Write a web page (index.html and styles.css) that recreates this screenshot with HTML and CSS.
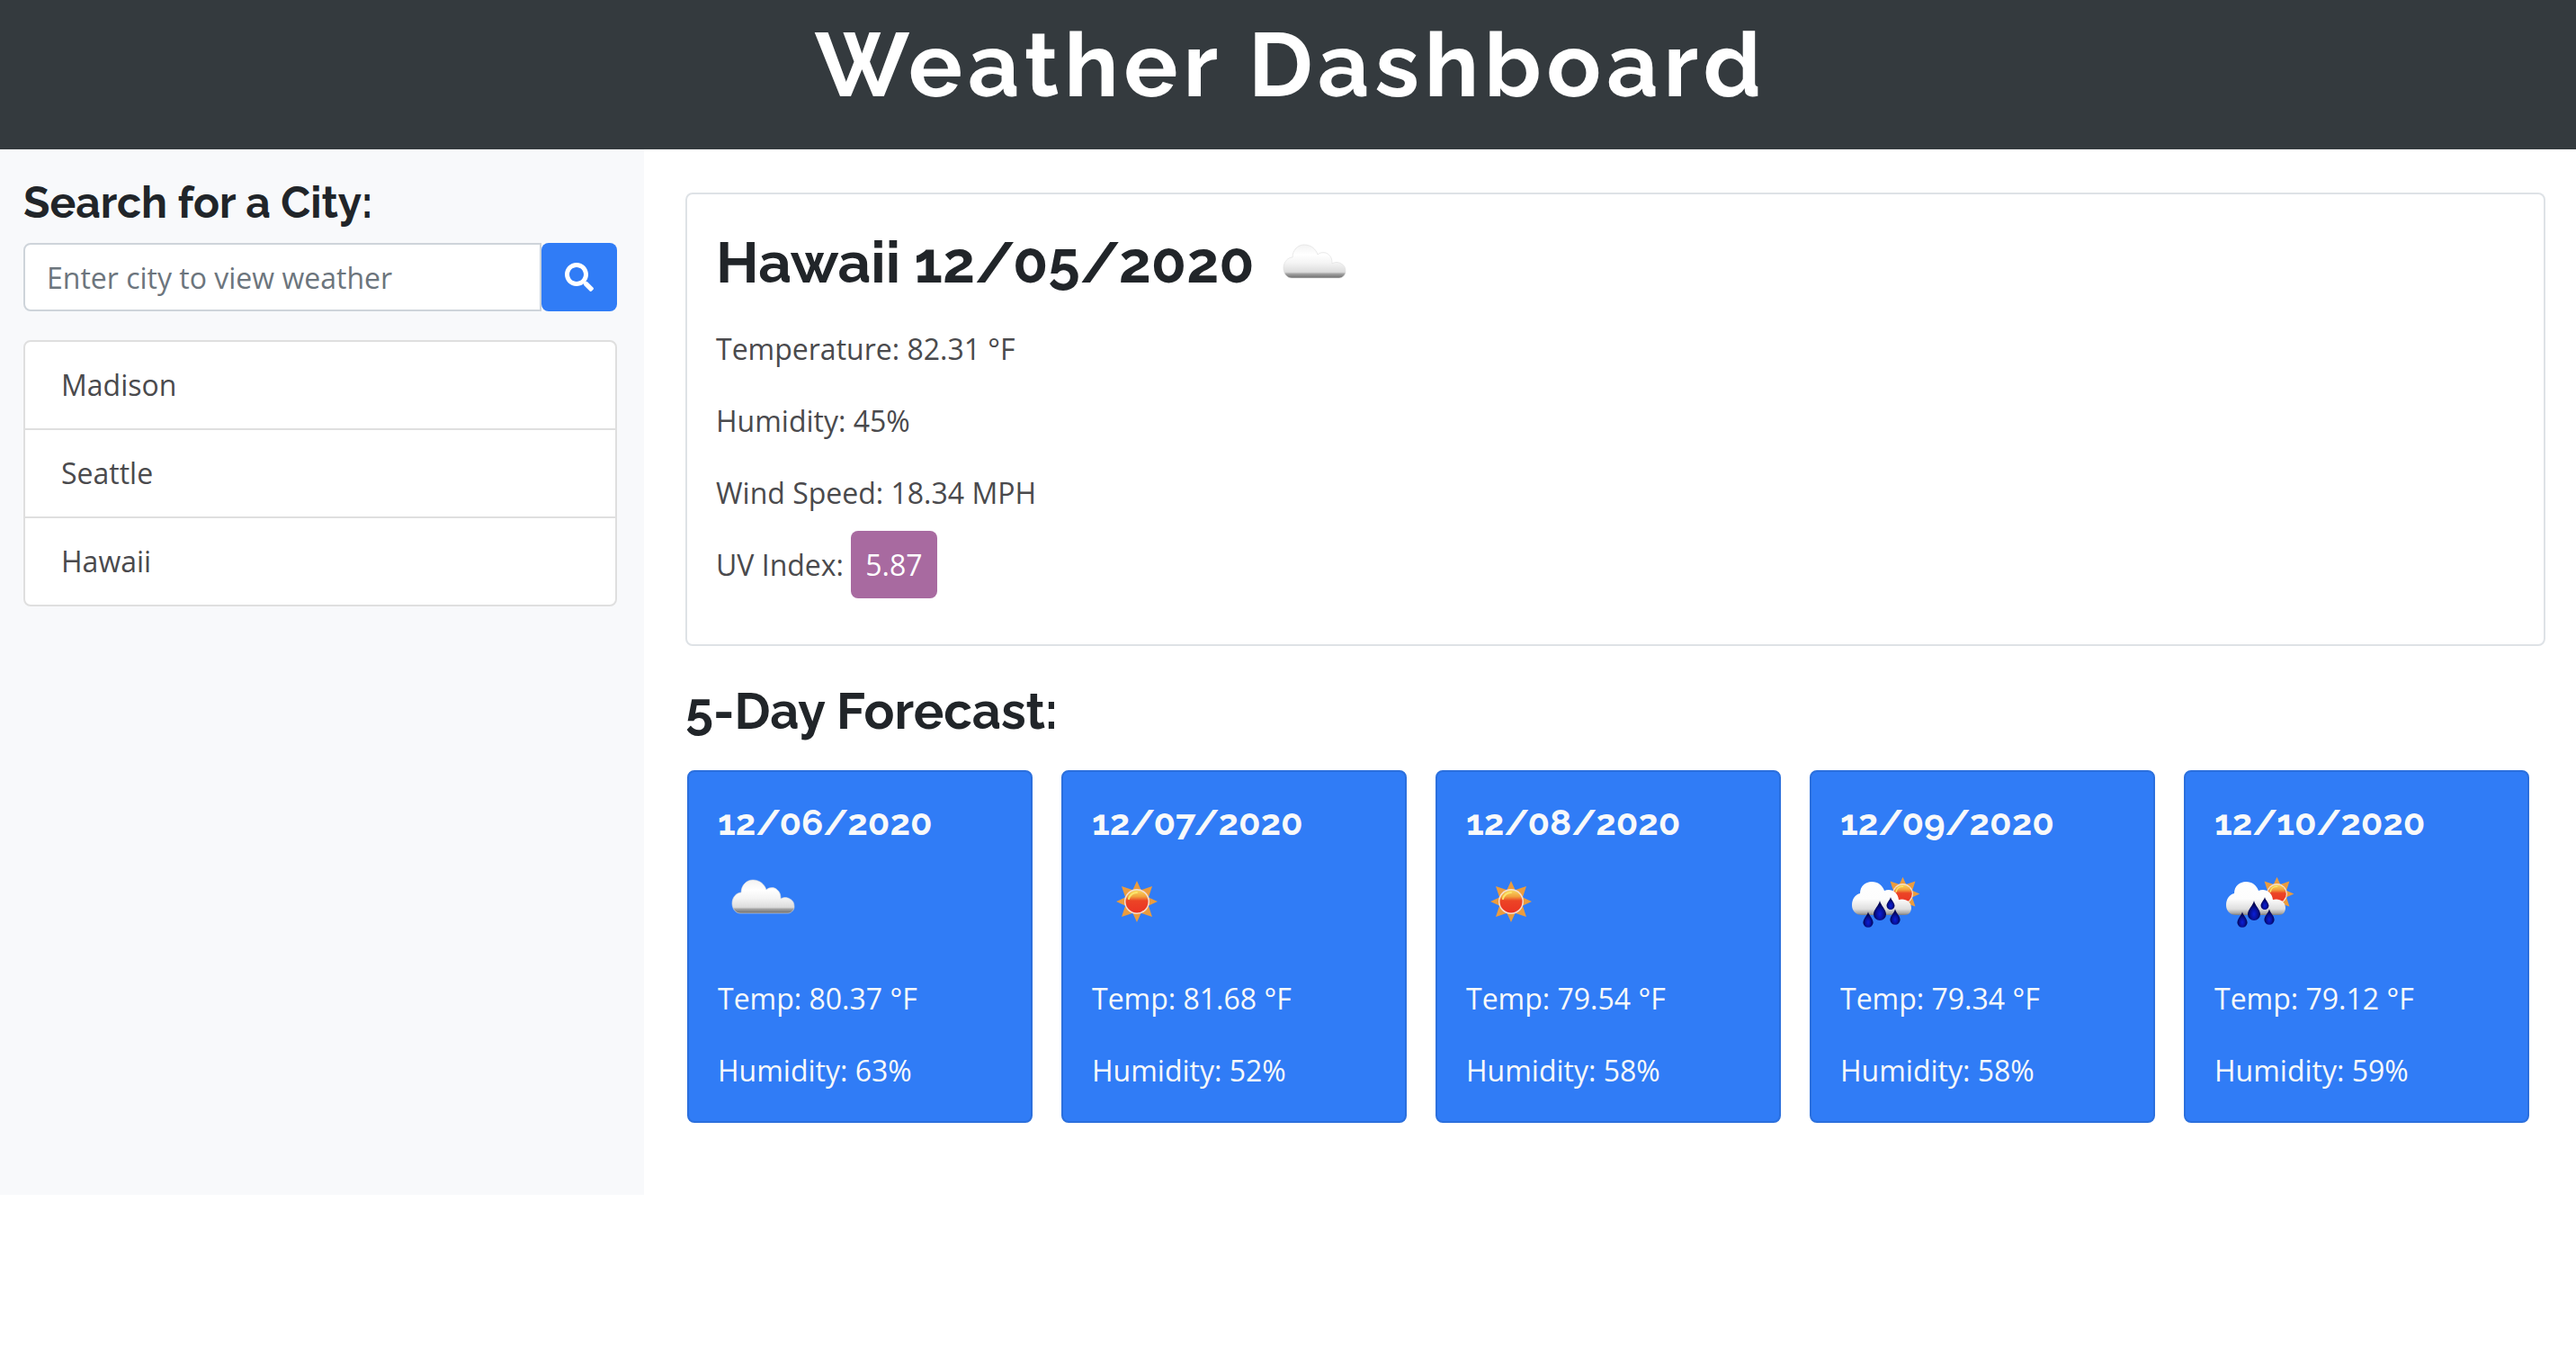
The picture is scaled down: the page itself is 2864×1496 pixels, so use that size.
FILE: index.html
```html
<!DOCTYPE html>
<html lang="en">
<head>
<meta charset="utf-8">
<meta name="viewport" content="width=device-width, initial-scale=1">
<title>Weather Dashboard</title>
<link rel="stylesheet" href="styles.css">
</head>
<body>
<svg class="sprite" aria-hidden="true">
  <defs>
    <linearGradient id="cloud-fill" x1="0" y1="24" x2="0" y2="61" gradientUnits="userSpaceOnUse">
      <stop offset="0" stop-color="#f3f3f3"/>
      <stop offset=".3" stop-color="#ffffff"/>
      <stop offset=".55" stop-color="#f4f4f4"/>
      <stop offset=".82" stop-color="#dcdcdc"/>
      <stop offset=".88" stop-color="#a0a0a0"/>
      <stop offset="1" stop-color="#6c6c6c"/>
    </linearGradient>
    <linearGradient id="rain-cloud-fill" x1="0" y1="26" x2="0" y2="64" gradientUnits="userSpaceOnUse">
      <stop offset="0" stop-color="#ffffff"/>
      <stop offset=".5" stop-color="#fdfdfd"/>
      <stop offset=".8" stop-color="#dedede"/>
      <stop offset=".92" stop-color="#a8a8a8"/>
      <stop offset="1" stop-color="#666666"/>
    </linearGradient>
    <linearGradient id="sun-fill" x1="0" y1="0" x2="0" y2="1">
      <stop offset="0" stop-color="#f8d860"/>
      <stop offset=".28" stop-color="#f2a03c"/>
      <stop offset=".46" stop-color="#ec4426"/>
      <stop offset="1" stop-color="#ea3323"/>
    </linearGradient>
    <radialGradient id="drop-fill" cx=".5" cy=".68" r=".5">
      <stop offset="0" stop-color="#0a1fd8"/>
      <stop offset=".5" stop-color="#0712a0"/>
      <stop offset="1" stop-color="#03044e"/>
    </radialGradient>
    <path id="rays" fill="#eb9c3e" d="M0-23 5-12H-5ZM0 23 5 12H-5ZM-23 0-12-5V5ZM23 0 12-5V5ZM-17-17-5-13-13-5ZM17-17 5-13 13-5ZM-17 17-5 13-13 5ZM17 17 5 13 13 5Z"/>
    <path id="drop" fill="url(#drop-fill)" d="M0-11C1-6 7-1 7 4A7 7 0 0 1-7 4C-7-1-1-6 0-11Z"/>
    <symbol id="sun" viewBox="-25 -25 50 50">
      <use href="#rays"/>
      <circle r="14" fill="#f5dfd3"/>
      <circle r="12.500" fill="url(#sun-fill)"/>
      <path d="M-9-3A9 9 0 0 1 0-10" fill="none" stroke="#fbe56a" stroke-width="2" stroke-linecap="round"/>
    </symbol>
    <symbol id="cloudy" viewBox="0 0 100 100">
      <path fill="url(#cloud-fill)" stroke="#dcdcdc" stroke-opacity=".6" d="M25 61C19 61 16 55 16 50C16 43 21 38 26 38C26 30 32 24 39 24C47 24 52 29 54 35C57 32 62 32 65 34C69 37 70 40 70 45C73 43 77 43 80 45C84 47 85 50 85 54C85 58 81 61 78 61Z"/>
    </symbol>
    <symbol id="clear" viewBox="0 0 100 100">
      <use href="#sun" x="25" y="23" width="50" height="50"/>
    </symbol>
    <symbol id="rain" viewBox="0 0 100 100">
      <use href="#sun" x="49" y="19" width="41" height="41"/>
      <path fill="url(#rain-cloud-fill)" d="M24 63C17 63 13 58 13 52C13 45 17 40 22 39C22 31 28 26 35 26C42 26 47 30 49 36C56 33 64 37 65 46C72 44 79 48 79 55C79 60 76 63 72 63Z"/>
      <use href="#drop" transform="translate(31 68) scale(.8)"/>
      <use href="#drop" transform="translate(44 58)"/>
      <use href="#drop" transform="translate(56 50) scale(.64)"/>
      <use href="#drop" transform="translate(61 65) scale(.8)"/>
    </symbol>
  </defs>
</svg>

<header class="site-header">
  <h1 class="site-title">Weather Dashboard</h1>
</header>

<div class="layout">
  <aside class="sidebar">
    <form class="search">
      <label class="search-label" for="city">Search for a City:</label>
      <div class="search-row">
        <input class="search-input" id="city" type="text" placeholder="Enter city to view weather">
        <button class="search-button" type="button" aria-label="Search">
          <svg class="search-icon" viewBox="0 0 512 512" aria-hidden="true"><path fill="currentColor" d="M505 442.700 405.300 343c-4.500-4.500-10.600-7-17-7H372c27.600-35.300 44-79.700 44-128C416 93.100 322.900 0 208 0S0 93.100 0 208s93.100 208 208 208c48.300 0 92.700-16.400 128-44v16.300c0 6.400 2.500 12.500 7 17l99.700 99.700c9.400 9.400 24.600 9.400 33.900 0l28.300-28.300c9.400-9.400 9.400-24.600.1-34zM208 336c-70.700 0-128-57.200-128-128 0-70.700 57.200-128 128-128 70.700 0 128 57.200 128 128 0 70.700-57.200 128-128 128z"/></svg>
        </button>
      </div>
    </form>
    <ul class="history">
      <li class="history-item">Madison</li>
      <li class="history-item">Seattle</li>
      <li class="history-item">Hawaii</li>
    </ul>
  </aside>

  <main class="content">
    <section class="current">
      <div class="current-head">
        <h2 class="current-title">Hawaii 12/05/2020</h2>
        <svg class="weather-icon" role="img" aria-label="Cloudy"><use href="#cloudy"/></svg>
      </div>
      <p class="reading">Temperature: 82.31 °F</p>
      <p class="reading">Humidity: 45%</p>
      <p class="reading">Wind Speed: 18.34 MPH</p>
      <p class="reading">UV Index: <span class="uv">5.87</span></p>
    </section>

    <h2 class="forecast-title">5-Day Forecast:</h2>
    <div class="forecast">
      <article class="day">
        <h3 class="day-date">12/06/2020</h3>
        <svg class="weather-icon" role="img" aria-label="Cloudy"><use href="#cloudy"/></svg>
        <p class="reading">Temp: 80.37 °F</p>
        <p class="reading">Humidity: 63%</p>
      </article>
      <article class="day">
        <h3 class="day-date">12/07/2020</h3>
        <svg class="weather-icon" role="img" aria-label="Clear"><use href="#clear"/></svg>
        <p class="reading">Temp: 81.68 °F</p>
        <p class="reading">Humidity: 52%</p>
      </article>
      <article class="day">
        <h3 class="day-date">12/08/2020</h3>
        <svg class="weather-icon" role="img" aria-label="Clear"><use href="#clear"/></svg>
        <p class="reading">Temp: 79.54 °F</p>
        <p class="reading">Humidity: 58%</p>
      </article>
      <article class="day">
        <h3 class="day-date">12/09/2020</h3>
        <svg class="weather-icon" role="img" aria-label="Rain"><use href="#rain"/></svg>
        <p class="reading">Temp: 79.34 °F</p>
        <p class="reading">Humidity: 58%</p>
      </article>
      <article class="day">
        <h3 class="day-date">12/10/2020</h3>
        <svg class="weather-icon" role="img" aria-label="Rain"><use href="#rain"/></svg>
        <p class="reading">Temp: 79.12 °F</p>
        <p class="reading">Humidity: 59%</p>
      </article>
    </div>
  </main>
</div>
</body>
</html>
```
FILE: styles.css
```css
*, *::before, *::after { box-sizing: border-box; }

body {
  margin: 0;
  background: #fff;
  color: #4a4a4d;
  font: 32px/48px "Open Sans", "Noto Sans", sans-serif;
}

h1, h2, h3, p, ul { margin: 0; }

.sprite { position: absolute; width: 0; height: 0; }

.site-title, .search-label, .current-title, .forecast-title, .day-date {
  font-family: Raleway, Lato, sans-serif;
  font-weight: 700;
  color: #212529;
}

.site-header {
  padding: 12px 32px 34px;
  background: #343a3e;
  text-align: center;
}

/* The indent balances the letter-spacing that trails the last letter. */
.site-title {
  font-size: 100px;
  line-height: 120px;
  letter-spacing: 6px;
  text-indent: 6px;
  color: #fff;
}

.layout {
  display: grid;
  grid-template-columns: 1fr 3fr;
}

.sidebar {
  padding: 32px 30px 32px 26px;
  background: #f8f9fb;
}

.search-label {
  display: block;
  margin-bottom: 18px;
  font-size: 48px;
  line-height: 54px;
}

.search-row { display: flex; }

.search-input {
  flex: 1;
  min-width: 0;
  height: 76px;
  padding: 12px 24px;
  border: 2px solid #ced4da;
  border-radius: 8px 0 0 8px;
  background: #fff;
  color: #495057;
  font: inherit;
}

.search-input::placeholder { color: #6c757d; opacity: 1; }

.search-button {
  display: flex;
  align-items: center;
  justify-content: center;
  width: 84px;
  height: 76px;
  padding: 0;
  border: 0;
  border-radius: 8px;
  background: #307cf6;
  color: #fff;
}

.search-icon { width: 32px; height: 32px; }

.history {
  margin-top: 32px;
  padding: 0;
  border: 2px solid #dfdfdf;
  border-radius: 8px;
  background: #fff;
  list-style: none;
}

.history-item { padding: 24px 40px; }
.history-item + .history-item { border-top: 2px solid #dfdfdf; }

.content { padding: 48px 34px 80px 46px; }

.current {
  padding: 32px 32px 64px;
  border: 2px solid #dee2e6;
  border-radius: 8px;
}

.current-head {
  display: flex;
  align-items: flex-start;
  gap: 16px;
  margin-bottom: 16px;
}

.current-title { font-size: 64px; line-height: 88px; }

.weather-icon { display: block; width: 100px; height: 100px; }

.reading + .reading { margin-top: 32px; }

.uv {
  padding: 16px;
  border-radius: 8px;
  background: #a86aa0;
  color: #fff;
}

.forecast-title {
  margin: 38px 0 32px;
  font-size: 56px;
  line-height: 68px;
}

.forecast {
  display: grid;
  grid-template-columns: repeat(5, 1fr);
  gap: 32px;
  margin: 0 18px 0 2px;
}

.day {
  padding: 32px;
  border: 2px solid #2b6fdd;
  border-radius: 8px;
  background: #307cf6;
  color: #f8f9fa;
}

.day-date {
  margin-bottom: 16px;
  font-size: 40px;
  line-height: 48px;
  color: #f8f9fa;
}

.day .weather-icon { margin-bottom: 32px; }
```
